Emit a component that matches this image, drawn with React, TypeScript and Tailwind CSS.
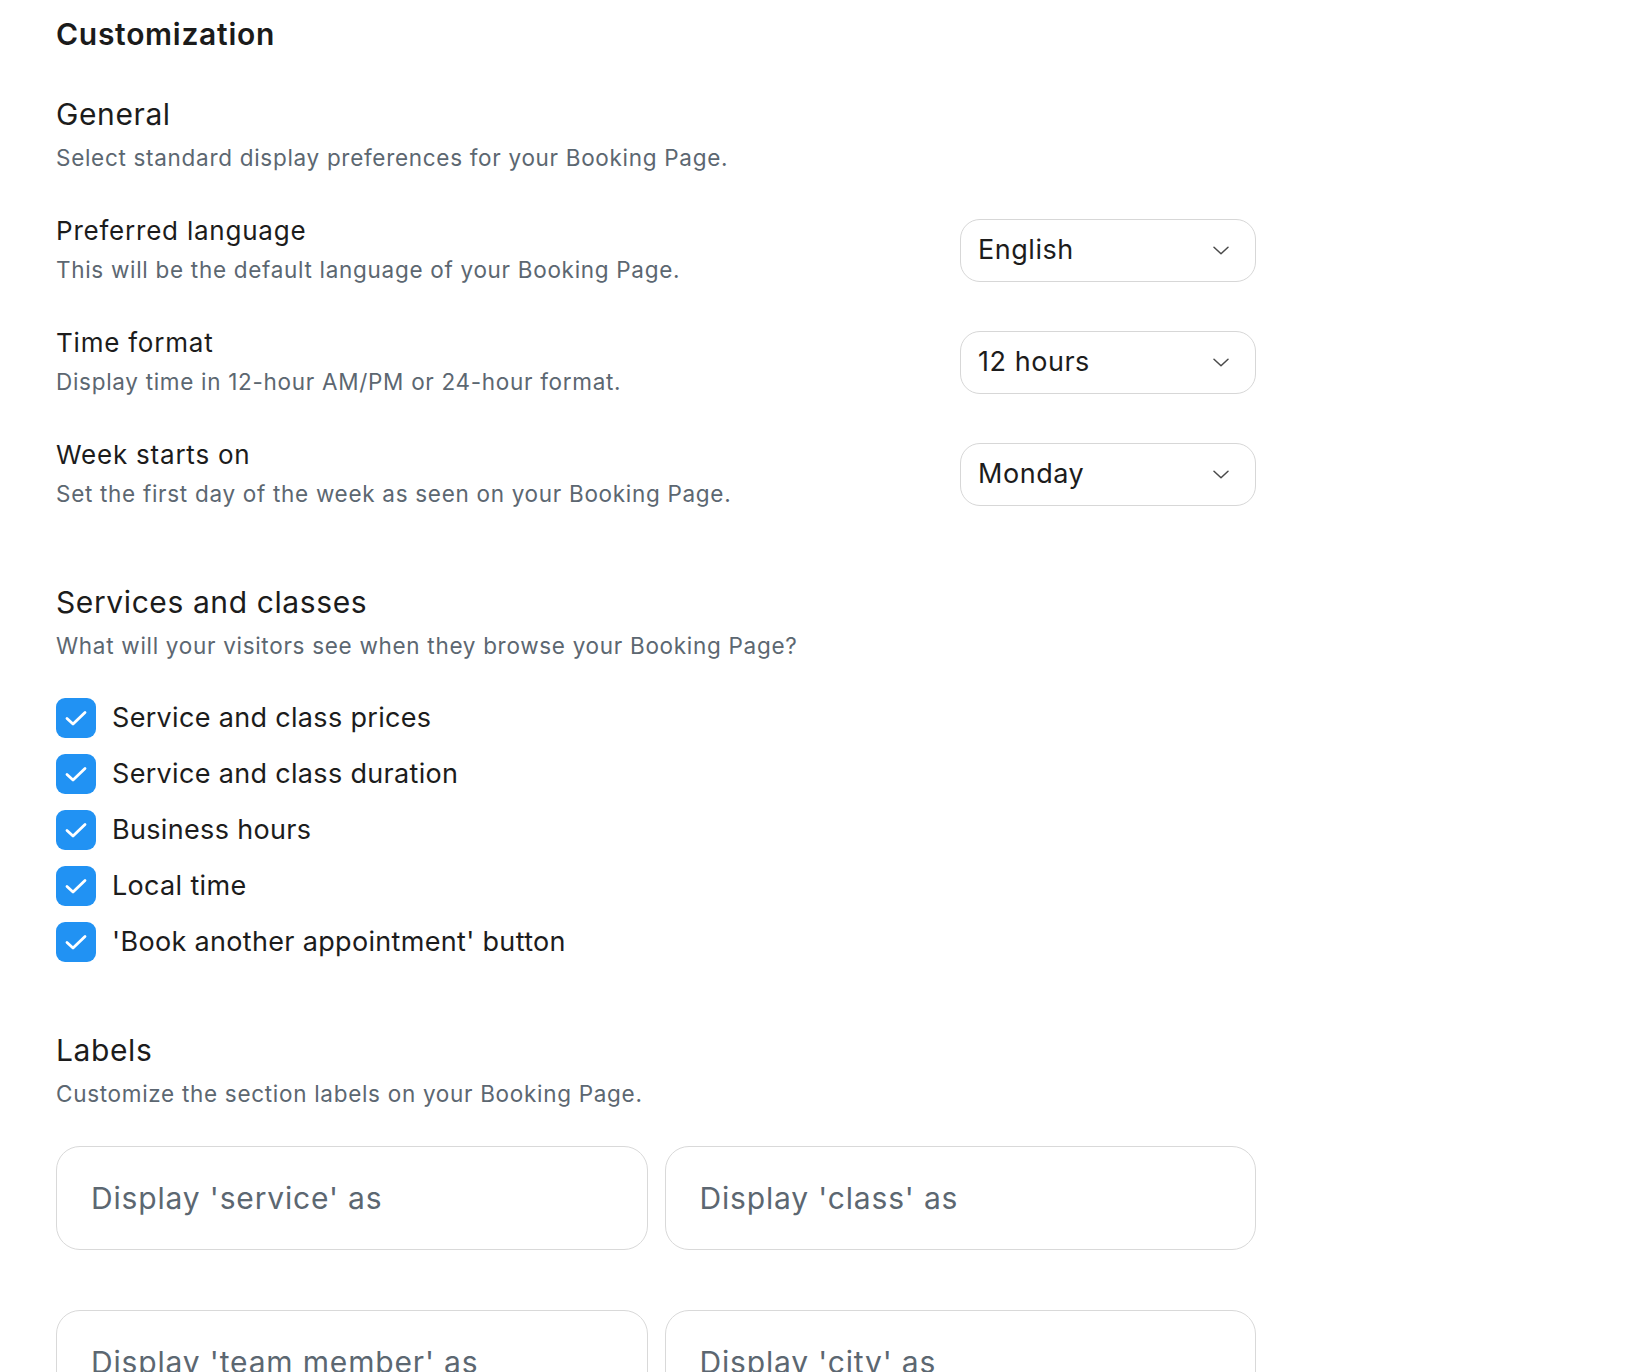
import React, { useState } from "react";

const font = "font-['Inter','Noto_Sans',sans-serif]";

interface PrefRow {
  title: string;
  description: string;
  value: string;
}

const prefRows: PrefRow[] = [
  {
    title: "Preferred language",
    description: "This will be the default language of your Booking Page.",
    value: "English",
  },
  {
    title: "Time format",
    description: "Display time in 12-hour AM/PM or 24-hour format.",
    value: "12 hours",
  },
  {
    title: "Week starts on",
    description: "Set the first day of the week as seen on your Booking Page.",
    value: "Monday",
  },
];

const visibilityOptions = [
  "Service and class prices",
  "Service and class duration",
  "Business hours",
  "Local time",
  "'Book another appointment' button",
];

const labelFields = [
  "Display 'service' as",
  "Display 'class' as",
  "Display 'team member' as",
  "Display 'city' as",
];

const Chevron = () => (
  <svg width="16" height="9" viewBox="0 0 16 9" fill="none" className="shrink-0">
    <path
      d="M1 1.2L8 7.8L15 1.2"
      stroke="#4a4a4a"
      strokeWidth="1.5"
      strokeLinecap="round"
      strokeLinejoin="round"
    />
  </svg>
);

const SelectBox = ({ value }: { value: string }) => (
  <button
    type="button"
    className="flex h-[63px] w-[296px] shrink-0 items-center justify-between rounded-[20px] border-[1.5px] border-[#d7d7d7] bg-white pl-[17px] pr-[26px] text-left"
  >
    <span className="text-[27px] leading-[36px] tracking-[0.02em] text-[#1c1c1c]">{value}</span>
    <Chevron />
  </button>
);

const CheckRow = ({ label }: { label: string }) => {
  const [checked, setChecked] = useState(true);
  return (
    <label className="flex h-10 cursor-pointer items-center gap-4">
      <span
        onClick={() => setChecked((c) => !c)}
        className={
          checked
            ? "flex h-10 w-10 shrink-0 items-center justify-center rounded-[9px] bg-[#2192f3]"
            : "flex h-10 w-10 shrink-0 items-center justify-center rounded-[9px] border-2 border-[#c9c9c9] bg-white"
        }
      >
        {checked && (
          <svg width="40" height="40" viewBox="0 0 40 40" fill="none">
            <path
              d="M11 20.5L17 26L29 14.5"
              stroke="white"
              strokeWidth="2.8"
              strokeLinecap="round"
              strokeLinejoin="round"
            />
          </svg>
        )}
      </span>
      <span className="text-[27px] leading-[40px] tracking-[0.012em] text-[#1c1c1c]">{label}</span>
    </label>
  );
};

const SectionHeader = ({ title, description }: { title: string; description: string }) => (
  <>
    <h2 className="text-[30px] leading-[36px] font-normal tracking-[0.02em] text-[#1c1c1c]">
      {title}
    </h2>
    <p className="mt-[10px] text-[22.5px] leading-[32px] tracking-[0.031em] text-[#5c6771]">
      {description}
    </p>
  </>
);

export default function App() {
  return (
    <div className={`min-h-screen bg-white ${font}`}>
      <div className="ml-[56px] w-[1200px] pt-4 pb-10">
        <h1 className="text-[30px] leading-[36px] font-semibold tracking-[0.024em] text-[#1b1b1b]">
          Customization
        </h1>

        {/* General */}
        <section className="mt-[44px]">
          <SectionHeader
            title="General"
            description="Select standard display preferences for your Booking Page."
          />
          <div className="mt-10 flex flex-col gap-10">
            {prefRows.map((row) => (
              <div key={row.title} className="flex items-center justify-between">
                <div>
                  <h3 className="text-[26px] leading-[34px] tracking-[0.03em] text-[#1c1c1c]">
                    {row.title}
                  </h3>
                  <p className="mt-[6px] text-[22.5px] leading-[32px] tracking-[0.031em] text-[#5c6771]">
                    {row.description}
                  </p>
                </div>
                <SelectBox value={row.value} />
              </div>
            ))}
          </div>
        </section>

        {/* Services and classes */}
        <section className="mt-[74px]">
          <SectionHeader
            title="Services and classes"
            description="What will your visitors see when they browse your Booking Page?"
          />
          <div className="mt-[36px] flex flex-col gap-4">
            {visibilityOptions.map((opt) => (
              <CheckRow key={opt} label={opt} />
            ))}
          </div>
        </section>

        {/* Labels */}
        <section className="mt-[70px]">
          <SectionHeader
            title="Labels"
            description="Customize the section labels on your Booking Page."
          />
          <div className="mt-9 grid grid-cols-2 gap-x-[17px] gap-y-[60px]">
            {labelFields.map((field) => (
              <div
                key={field}
                className="flex h-[104px] items-center rounded-[24px] border-[1.5px] border-[#d9d9d9] bg-white px-[34px]"
              >
                <span className="text-[30px] leading-[36px] tracking-[0.028em] text-[#5c6771]">
                  {field}
                </span>
              </div>
            ))}
          </div>
        </section>
      </div>
    </div>
  );
}
